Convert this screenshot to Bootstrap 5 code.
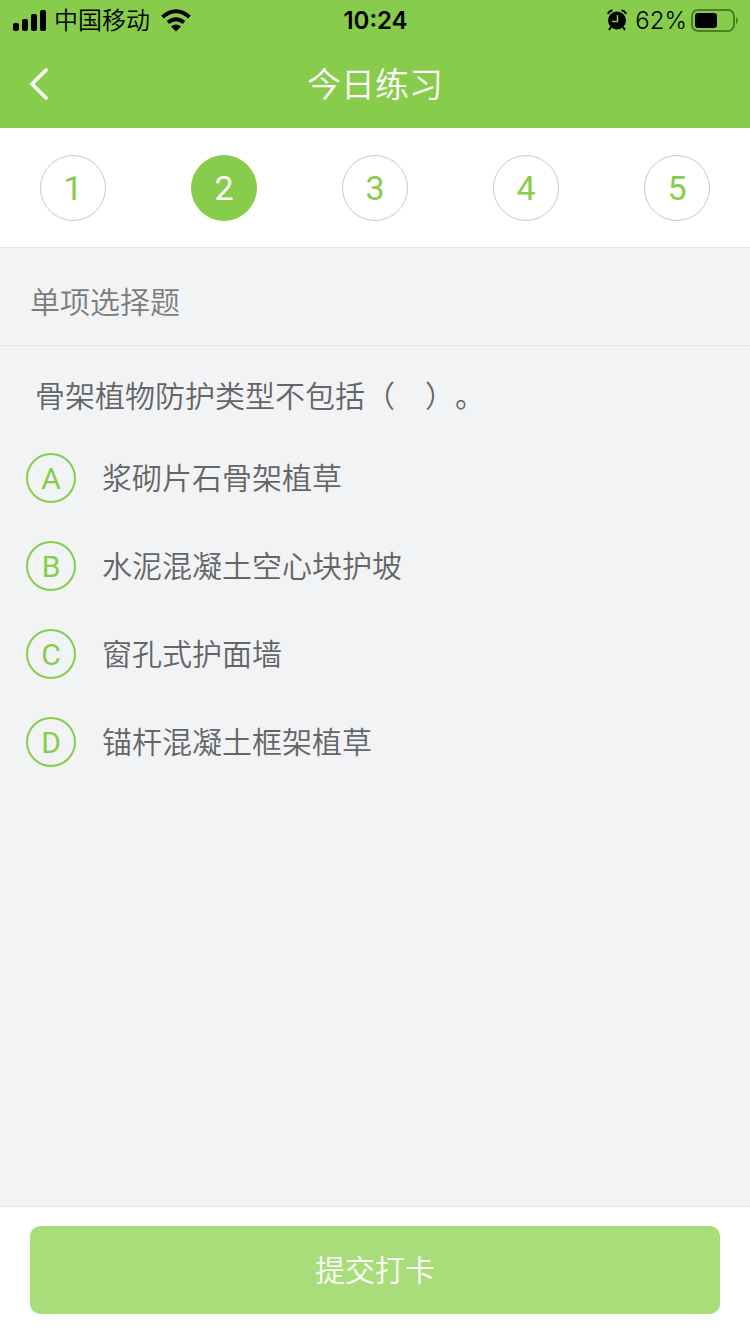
<!DOCTYPE html>
<html lang="zh-CN">
<head>
<meta charset="utf-8">
<meta name="viewport" content="width=device-width, initial-scale=1">
<title>今日练习</title>
<link href="https://cdn.jsdelivr.net/npm/bootstrap@5.3.0/dist/css/bootstrap.min.css" rel="stylesheet">
<style>
  :root { --leaf: #87cd4b; --leaf-soft: #a9dd7a; --hairline: #e4e5e7; }
  body { font-family: Inter, "Noto Sans CJK SC", sans-serif; font-weight: 350; font-size: 30px; line-height: 44px; color: #646567; background: #f2f3f5; }
  .top-area { background: var(--leaf); }
  .status-bar { height: 40px; padding: 2px 11px 0 12px; font-size: 24px; line-height: 38px; color: #000; }
  .title-bar { height: 88px; }
  .title-bar h1 { font-size: 34px; line-height: 48px; font-weight: 350; padding-top: 2px; }
  .back-link { width: 48px; padding-left: 28px; }
  .step-bar { padding: 27px 40px 26px; border-bottom: 1px solid var(--hairline); }
  .step-btn { width: 66px; height: 66px; font: 400 34px/64px Roboto, sans-serif; color: var(--leaf); background: #fff; border: 1px solid #c8c8c8; }
  .step-btn.current { color: #fff; background: var(--leaf); border-color: var(--leaf); }
  .section-title { padding: 32px 30px 21px; font-size: 30px; line-height: 44px; font-weight: 350; color: #7b7c7e; border-bottom: 1px solid var(--hairline); }
  .question { padding: 28px 35px 0; }
  .question legend { font-size: 30px; line-height: 44px; text-spacing-trim: space-all; }
  .choices { padding: 35px 26px; gap: 38px; }
  .choice { gap: 26px; cursor: pointer; }
  .choice-letter { width: 50px; height: 50px; font: 400 30px/48px Roboto, sans-serif; border: 2px solid var(--leaf); color: var(--leaf); }
  .btn-check:checked + .choice .choice-letter { background: var(--leaf); color: #fff; }
  .submit-bar { padding: 19px 30px 20px; border-top: 1px solid var(--hairline); }
  .submit-btn, .submit-btn:hover { height: 88px; border-radius: 10px; font-size: 30px; font-weight: 350; color: #fff; background: var(--leaf-soft); border: 0; }
</style>
</head>
<body>
<div class="d-flex flex-column min-vh-100">
  <header class="top-area">
    <div class="status-bar row g-0 align-items-center">
      <div class="col d-flex align-items-center">
        <svg width="34" height="22" viewBox="0 0 34 22" aria-hidden="true"><rect x="1" y="13" width="6" height="8" rx="2"/><rect x="10" y="9" width="6" height="12" rx="2"/><rect x="19" y="4" width="6" height="17" rx="2"/><rect x="28" y="0" width="6" height="21" rx="2"/></svg>
        <span class="ms-2">中国移动</span>
        <svg class="ms-2" width="36" height="24" viewBox="-1 1 36 24" aria-hidden="true"><g fill="none" stroke="#000" stroke-width="4"><path d="M3.500 9Q17 -2.500 30.500 9"/><path d="M9 14.500Q17 8 25 14.500"/></g><path d="M12 18.500Q17 14.500 22 18.500L17 23.500Z"/></svg>
      </div>
      <div class="col-auto fw-semibold">10:24</div>
      <div class="col d-flex align-items-center justify-content-end">
        <svg width="20" height="24" viewBox="0 0 20 24" aria-hidden="true"><circle cx="10" cy="11.500" r="9"/><path d="M1 5A5 5 0 0 1 5.500 1.500M14.500 1.500A5 5 0 0 1 19 5M4 18L2 21M16 18L18 21" fill="none" stroke="#000" stroke-width="2"/><path d="M10.500 6V12.500H5" fill="none" stroke="#87cd4b" stroke-width="1.500"/></svg>
        <span class="ms-2 me-1">62%</span>
        <svg width="48" height="24" viewBox="0 0 48 24" aria-hidden="true"><rect x="1" y="1" width="42" height="21" rx="6" fill="none" stroke="#4f7d28" stroke-width="2"/><rect x="4" y="4" width="22" height="15" rx="3"/><path d="M45 8Q47 9 47 11.500T45 15Z" fill="#4f7d28"/></svg>
      </div>
    </div>
    <nav class="title-bar row g-0 align-items-center text-white" aria-label="页面导航">
      <div class="col"><a class="back-link d-flex" href="#" aria-label="返回"><svg width="20" height="32" viewBox="0 0 20 32"><path d="M18 2L4 16L18 30" fill="none" stroke="#fff" stroke-width="3.500" stroke-linecap="round"/></svg></a></div>
      <h1 class="col-auto m-0">今日练习</h1>
      <div class="col"></div>
    </nav>
  </header>

  <nav class="step-bar d-flex justify-content-between bg-white" aria-label="题号">
    <button type="button" class="step-btn rounded-circle p-0">1</button>
    <button type="button" class="step-btn rounded-circle p-0 current" aria-current="step">2</button>
    <button type="button" class="step-btn rounded-circle p-0">3</button>
    <button type="button" class="step-btn rounded-circle p-0">4</button>
    <button type="button" class="step-btn rounded-circle p-0">5</button>
  </nav>

  <main class="flex-grow-1">
    <h2 class="section-title m-0">单项选择题</h2>
    <form id="quiz">
      <fieldset>
        <div class="question"><legend class="m-0">骨架植物防护类型不包括（　）。</legend></div>
        <div class="choices d-flex flex-column align-items-start">
          <div><input class="btn-check" type="radio" name="answer" id="optA"><label class="choice d-flex align-items-center" for="optA"><span class="choice-letter rounded-circle text-center">A</span><span>浆砌片石骨架植草</span></label></div>
          <div><input class="btn-check" type="radio" name="answer" id="optB"><label class="choice d-flex align-items-center" for="optB"><span class="choice-letter rounded-circle text-center">B</span><span>水泥混凝土空心块护坡</span></label></div>
          <div><input class="btn-check" type="radio" name="answer" id="optC"><label class="choice d-flex align-items-center" for="optC"><span class="choice-letter rounded-circle text-center">C</span><span>窗孔式护面墙</span></label></div>
          <div><input class="btn-check" type="radio" name="answer" id="optD"><label class="choice d-flex align-items-center" for="optD"><span class="choice-letter rounded-circle text-center">D</span><span>锚杆混凝土框架植草</span></label></div>
        </div>
      </fieldset>
    </form>
  </main>

  <footer class="submit-bar bg-white">
    <button type="submit" form="quiz" class="submit-btn btn w-100">提交打卡</button>
  </footer>
</div>
<script src="https://cdn.jsdelivr.net/npm/bootstrap@5.3.0/dist/js/bootstrap.bundle.min.js"></script>
</body>
</html>
